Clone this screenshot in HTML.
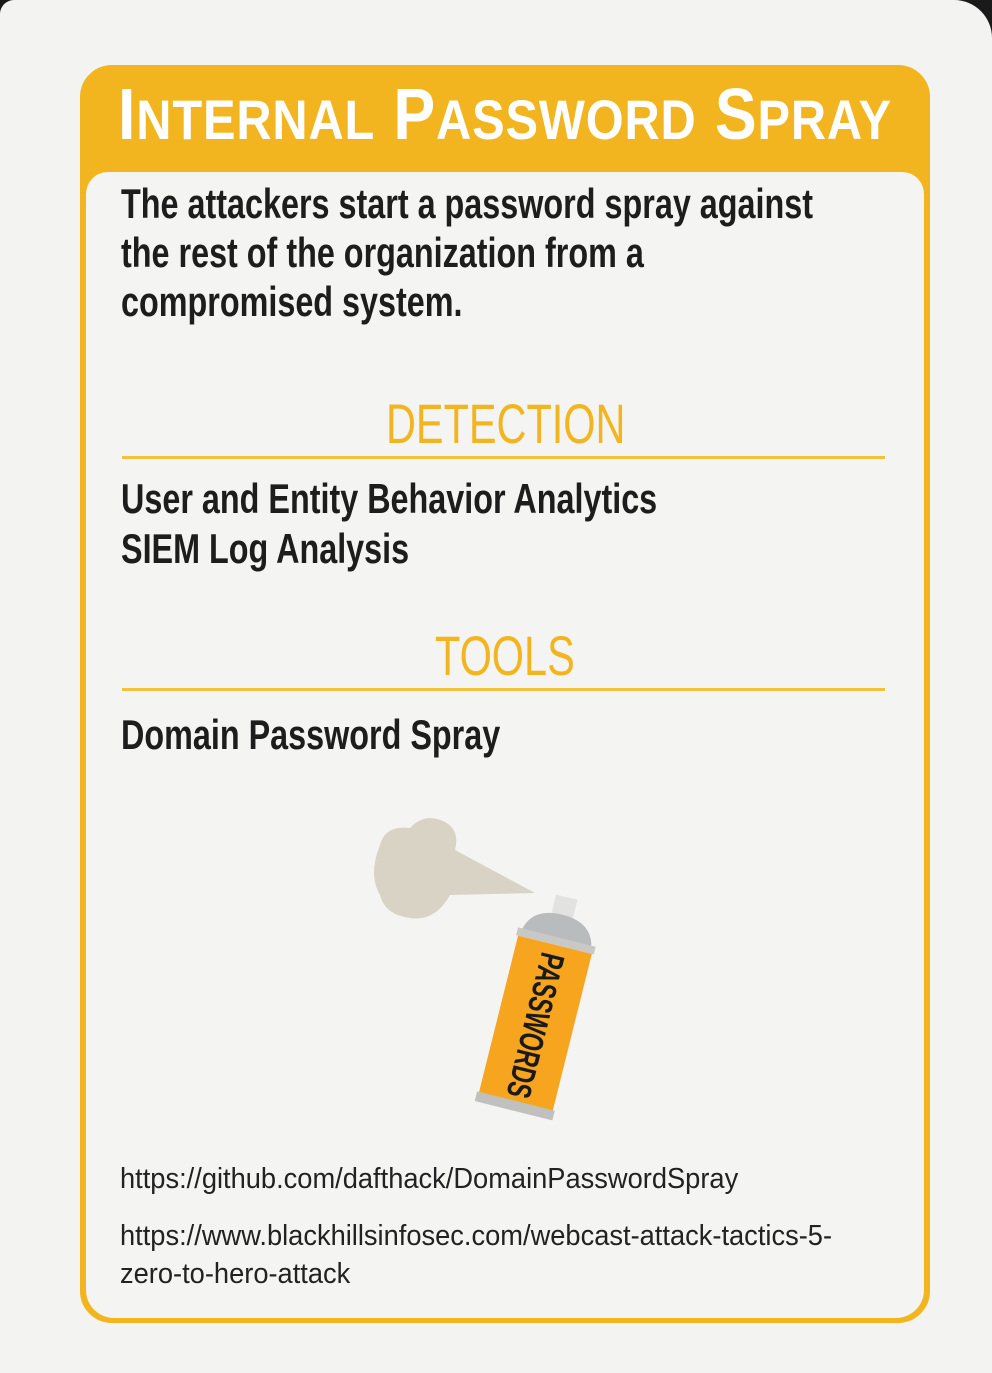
<!DOCTYPE html>
<html><head><meta charset="utf-8"><style>
html,body{margin:0;padding:0;}
body{width:992px;height:1373px;background:#f3f3f1;position:relative;overflow:hidden;font-family:"Liberation Sans",sans-serif;}
.cornerTR{position:absolute;right:0;top:0;width:40px;height:40px;background:#1a1a1a;}
.cornerTR:after{content:"";position:absolute;left:-40px;top:0;width:80px;height:80px;border-radius:38px;background:#f3f3f1;}
.cornerTL{position:absolute;left:0;top:0;width:14px;height:14px;background:#1a1a1a;}
.cornerTL:after{content:"";position:absolute;left:0;top:0;width:28px;height:28px;border-radius:14px;background:#f3f3f1;}
.box{position:absolute;left:80px;top:65px;width:840px;height:1248px;border:5px solid #f2b51f;border-radius:32px;background:#f2b51f;}
.inner{position:absolute;left:1px;top:102px;right:1px;bottom:0;background:#f4f4f2;border-radius:22px 22px 28px 28px;}
.t{position:absolute;white-space:nowrap;transform-origin:0 0;}
.title{left:118px;top:74px;color:#fff;font-weight:bold;font-size:72px;transform:scaleX(0.87);letter-spacing:1px;}
.title small{font-size:56px;}
.body{color:#1d1d1d;font-size:42px;font-weight:bold;transform:scaleX(0.77);left:121px;}
.h{color:#f2b51f;font-size:56px;transform:scaleX(0.74);}
.rule{position:absolute;left:122px;width:763px;height:3px;background:#f2c23a;}
.url{color:#222;font-size:29px;transform:scaleX(0.94);left:120px;}
</style></head><body>
<div class="cornerTL"></div><div class="cornerTR"></div>
<div class="box"><div class="inner"></div></div>
<div class="t title">I<small>NTERNAL</small> P<small>ASSWORD</small> S<small>PRAY</small></div>
<div class="t body" style="top:180px">The attackers start a password spray against</div>
<div class="t body" style="top:229px">the rest of the organization from a</div>
<div class="t body" style="top:278px">compromised system.</div>
<div class="t h" style="left:386px;top:391px">DETECTION</div>
<div class="rule" style="top:456px"></div>
<div class="t body" style="top:475px">User and Entity Behavior Analytics</div>
<div class="t body" style="top:525px">SIEM Log Analysis</div>
<div class="t h" style="left:435px;top:623px">TOOLS</div>
<div class="rule" style="top:688px"></div>
<div class="t body" style="top:711px">Domain Password Spray</div>
<svg style="position:absolute;left:350px;top:800px" width="260" height="330" viewBox="0 0 260 330">
<path d="M30 45 Q35 25 60 28 Q75 12 95 22 Q110 30 105 50 L185 93 L100 95 Q85 122 60 118 Q35 115 30 95 Q18 75 30 45Z" fill="#d8d3c4"/>
<g transform="rotate(14 180 220)">
<rect x="175" y="92" width="22" height="22" fill="#e2e2e0"/>
<path d="M150 135 Q155 110 186 110 Q217 110 222 135Z" fill="#b9bcbc"/>
<rect x="146" y="133" width="80" height="8" fill="#c8c8c6"/>
<rect x="148" y="141" width="76" height="165" fill="#f7a41e"/>
<rect x="146" y="302" width="80" height="10" fill="#c0c0be"/>
<text transform="translate(175 150) rotate(90)" font-family="Liberation Sans" font-weight="bold" font-size="34" fill="#1a1a1a" textLength="148" lengthAdjust="spacingAndGlyphs">PASSWORDS</text>
</g>
</svg>
<div class="t url" style="top:1163px">https://github.com/dafthack/DomainPasswordSpray</div>
<div class="t url" style="top:1220px">https://www.blackhillsinfosec.com/webcast-attack-tactics-5-</div>
<div class="t url" style="top:1258px">zero-to-hero-attack</div>
</body></html>
